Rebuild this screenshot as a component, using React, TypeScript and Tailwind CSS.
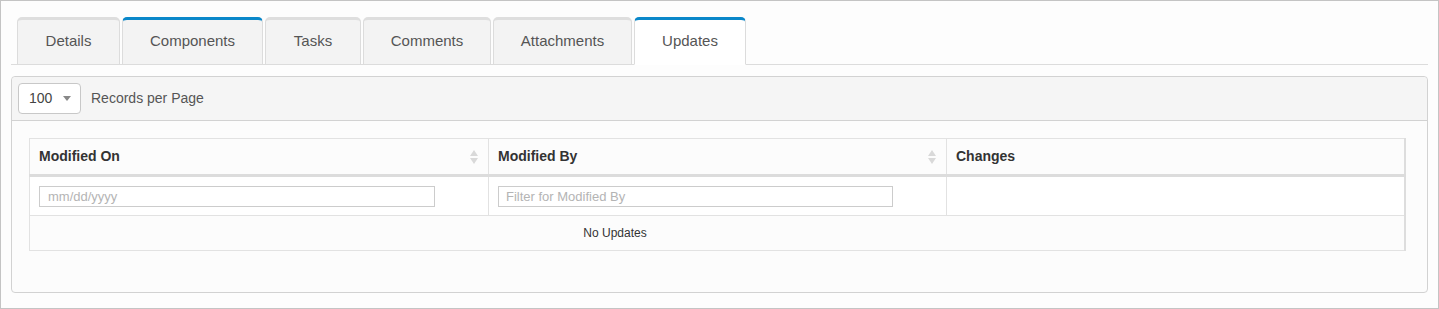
import React from "react";

const tabs = [
  { label: "Details", w: "w-[103px]", blue: false, active: false },
  { label: "Components", w: "w-[141px]", blue: true, active: false },
  { label: "Tasks", w: "w-[96px]", blue: false, active: false },
  { label: "Comments", w: "w-[128px]", blue: false, active: false },
  { label: "Attachments", w: "w-[139px]", blue: false, active: false },
  { label: "Updates", w: "w-[112px]", blue: true, active: true },
];

function SortIcon() {
  return (
    <svg width="10" height="16" viewBox="0 0 10 16" className="shrink-0">
      <path d="M5 1 L9 7 L1 7 Z" fill="#d9d9d9" />
      <path d="M5 15 L9 9 L1 9 Z" fill="#d9d9d9" />
    </svg>
  );
}

export default function App() {
  return (
    <div
      className="w-[1439px] h-[309px] border border-[#c4c4c4] bg-[#fdfdfd] px-[10px] pt-[16px]"
      style={{ fontFamily: '"Liberation Sans", Arial, sans-serif' }}
    >
      {/* tabs */}
      <div className="flex items-end h-[48px] border-b border-[#dcdcdc] pl-[6px]">
        {tabs.map((t) => (
          <div
            key={t.label}
            className={
              t.w +
              " mr-[2px] h-[48px] -mb-px flex items-center justify-center rounded-t-[5px] border border-[#dcdcdc] text-[15px] text-[#555] " +
              (t.blue ? "border-t-[3px] border-t-[#0a87c9] " : "border-t-[3px] border-t-[#dedede] ") +
              (t.active ? "bg-white border-b-white" : "bg-[#f3f3f3]")
            }
          >
            <span className="pb-[1px]">{t.label}</span>
          </div>
        ))}
      </div>

      {/* panel */}
      <div className="mt-[11px] h-[217px] rounded-[4px] border border-[#d2d2d2] bg-[#fcfcfc]">
        <div className="h-[44px] flex items-center gap-[10px] pl-[6px] bg-[#f5f5f5] border-b border-[#d2d2d2] rounded-t-[4px]">
          <div className="w-[63px] h-[31px] rounded-[4px] border border-[#c8c8c8] bg-white flex items-center pl-[10px] text-[14px] text-[#444]">
            <span>100</span>
            <svg width="10" height="6" viewBox="0 0 10 6" className="ml-[10px] mt-[1px]">
              <path d="M1 0 L9 0 L5 5 Z" fill="#888" />
            </svg>
          </div>
          <span className="text-[14px] text-[#555]">Records per Page</span>
        </div>

        <div className="pt-[17px] pl-[17px]">
          <table className="table-fixed border-collapse w-[1375px] border-r-2 border-[#dddddd]">
            <colgroup>
              <col className="w-[459px]" />
              <col className="w-[458px]" />
              <col className="w-[458px]" />
            </colgroup>
            <thead>
              <tr className="h-[37px] bg-[#fcfcfc]">
                <th className="border border-[#e2e2e2] border-b-[3px] border-b-[#dcdcdc] text-left px-[9px] text-[14px] font-bold text-[#333]">
                  <div className="flex items-center justify-between">
                    <span>Modified On</span>
                    <SortIcon />
                  </div>
                </th>
                <th className="border border-[#e2e2e2] border-b-[3px] border-b-[#dcdcdc] text-left px-[9px] text-[14px] font-bold text-[#333]">
                  <div className="flex items-center justify-between">
                    <span>Modified By</span>
                    <SortIcon />
                  </div>
                </th>
                <th className="border border-[#e2e2e2] border-b-[3px] border-b-[#dcdcdc] text-left px-[9px] text-[14px] font-bold text-[#333]">
                  Changes
                </th>
              </tr>
            </thead>
            <tbody>
              <tr className="h-[40px] bg-white">
                <td className="border border-[#e2e2e2] px-[9px]">
                  <input
                    readOnly
                    placeholder="mm/dd/yyyy"
                    className="w-[396px] h-[21px] border border-[#cccccc] px-[8px] text-[13px] placeholder:text-[#b4b4b4] outline-none"
                    style={{ fontFamily: '"Liberation Sans", Arial, sans-serif' }}
                  />
                </td>
                <td className="border border-[#e2e2e2] px-[9px]">
                  <input
                    readOnly
                    placeholder="Filter for Modified By"
                    className="w-[395px] h-[21px] border border-[#cccccc] px-[7px] text-[13px] placeholder:text-[#b4b4b4] outline-none"
                    style={{ fontFamily: '"Liberation Sans", Arial, sans-serif' }}
                  />
                </td>
                <td className="border border-[#e2e2e2]"></td>
              </tr>
              <tr className="h-[35px] bg-[#fcfcfc]">
                <td colSpan={3} className="border border-[#e2e2e2] text-[12px] text-[#333]">
                  <div className="w-[1170px] text-center">No Updates</div>
                </td>
              </tr>
            </tbody>
          </table>
        </div>
      </div>
    </div>
  );
}
